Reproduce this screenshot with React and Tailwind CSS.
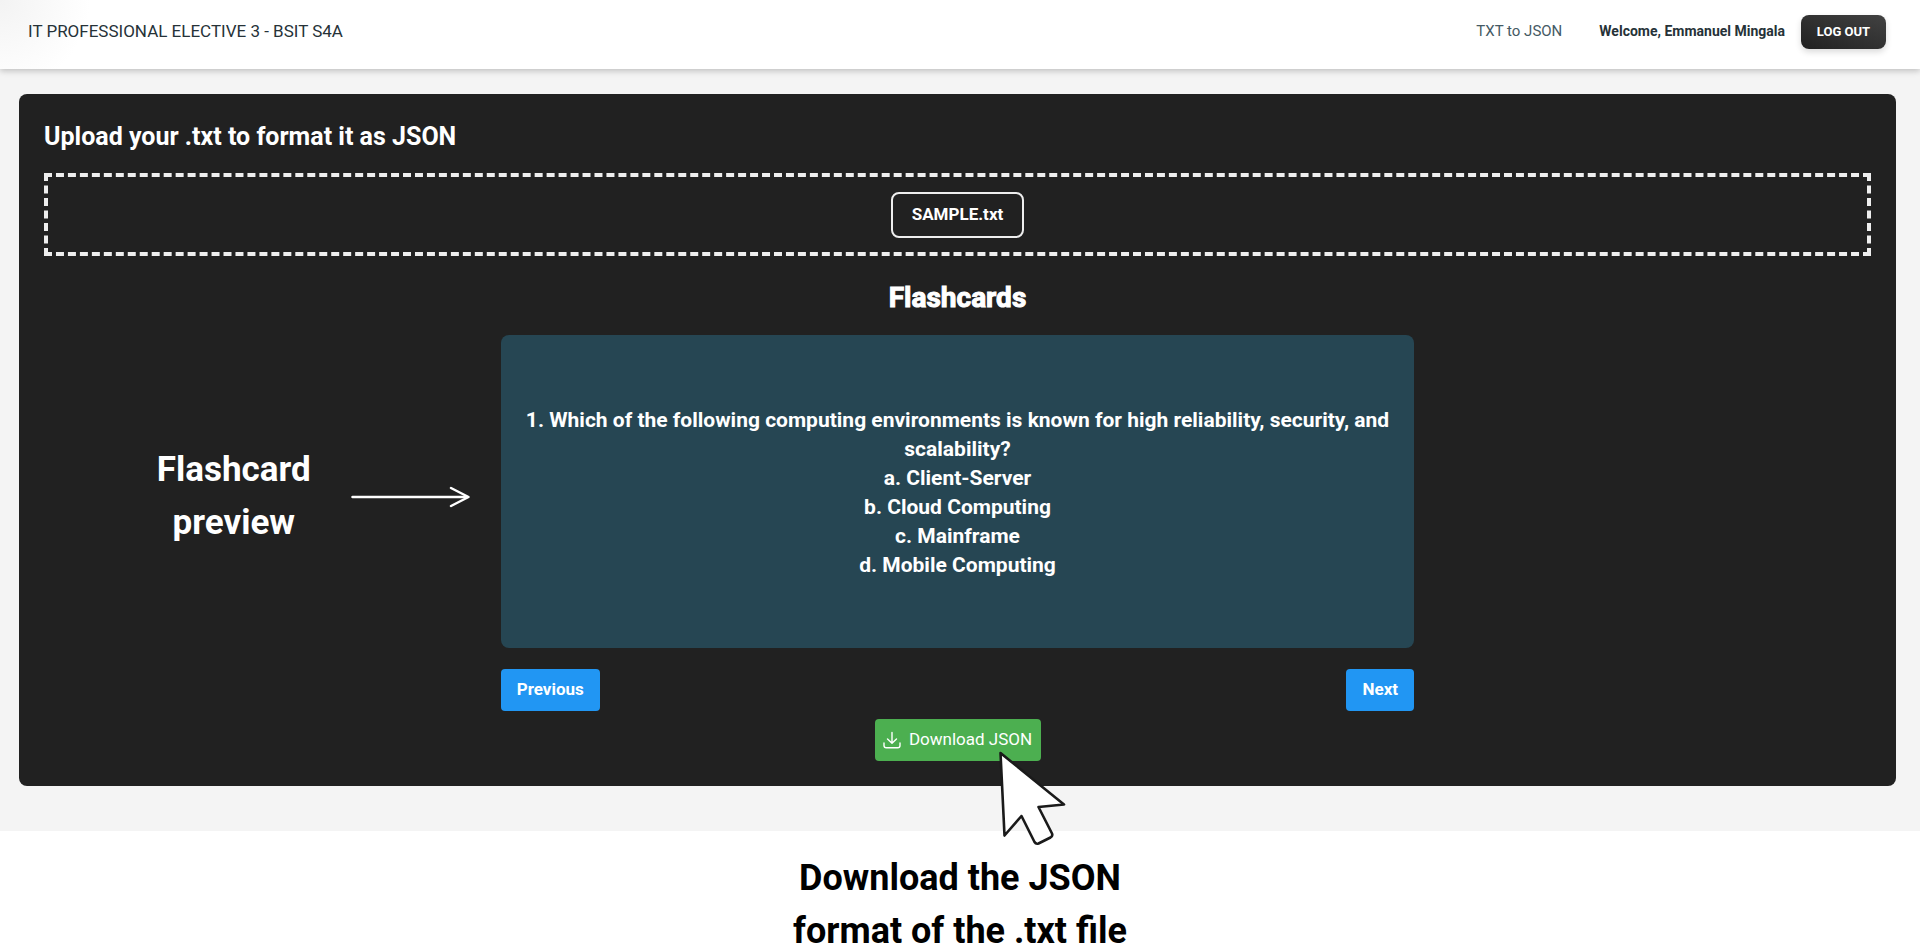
const display = 'font-[Roboto,sans-serif] font-bold';

const card = {
  question:
    '1. Which of the following computing environments is known for high reliability, security, and scalability?',
  options: ['a. Client-Server', 'b. Cloud Computing', 'c. Mainframe', 'd. Mobile Computing'],
};

function Header() {
  return (
    <header className="relative z-10 flex h-[69px] items-center bg-white bg-[radial-gradient(circle_at_0_0,#f3f3f3_0,#ffffff_90px)] pr-[34px] pl-7 pb-[6px] shadow-[0_2px_6px_rgba(0,0,0,0.22)]">
      <h1 className="text-[17px] text-[#263238]">IT PROFESSIONAL ELECTIVE 3 - BSIT S4A</h1>
      <nav className="ml-auto flex items-center">
        <a href="#convert" className="mr-[37px] text-[15px] text-[#455a64]">
          TXT to JSON
        </a>
        <span className={`${display} mr-4 text-[14px] text-[#263238]`}>Welcome, Emmanuel Mingala</span>
        <button
          type="button"
          className="h-[34px] w-[85px] rounded-lg bg-linear-to-tr from-[#212121] to-[#424242] text-[13px] font-bold text-white shadow-[0_3px_6px_rgba(0,0,0,0.15)]"
        >
          LOG OUT
        </button>
      </nav>
    </header>
  );
}

function PreviewNote() {
  return (
    <div className="flex items-center justify-end gap-10 pt-[10px] pr-[31px] text-white">
      <p className={`${display} flex flex-col gap-[13px] text-center text-[35px] leading-10`}>
        <span>Flashcard</span>
        <span>preview</span>
      </p>
      <svg width="119" height="22" viewBox="0 0 119 22" fill="none" stroke="currentColor" strokeLinecap="round" strokeLinejoin="round" aria-hidden="true">
        <path d="M1.5 11H116" strokeWidth="2.5" />
        <path d="M100 2L117.5 11L100 20" strokeWidth="2.5" />
      </svg>
    </div>
  );
}

function Cursor() {
  return (
    <svg className="absolute top-8 left-[123px]" width="68" height="95" viewBox="0 0 68 95" fill="#ffffff" stroke="#1a1a1a" strokeWidth="2.6" strokeLinejoin="round" aria-hidden="true">
      <path d="M2.5 2L66 53.500L40.500 56L54 82.500Q55 85 52.500 86.500L40.500 92.500Q38 93.500 36.500 91L23.500 65L6.500 84.500Z" />
    </svg>
  );
}

function DownloadIcon() {
  return (
    <svg width="18" height="18" viewBox="0 0 18 18" fill="none" stroke="currentColor" strokeWidth="1.4" strokeLinecap="round" strokeLinejoin="round" aria-hidden="true">
      <path d="M9 1.500V12M4.500 8L9 12.300L13.500 8" />
      <path d="M1 12V14.500Q1 16.800 3.300 16.800H14.700Q17 16.800 17 14.500V12" />
    </svg>
  );
}

export default function App() {
  return (
    <div className="bg-white font-[Roboto,sans-serif]">
      <div className="bg-[#f4f4f4] pb-[45px]">
        <Header />
        <main id="convert" className="mt-[25px] mr-6 ml-[19px] rounded-lg bg-[#212121] p-[25px] text-white">
          <h2 className="pt-[2px] mb-5 text-[25px] leading-8 font-bold">Upload your .txt to format it as JSON</h2>
          <div className="flex h-[83px] items-center justify-center border-4 border-dashed border-[#eeeeee]">
            <button type="button" className="h-[46px] w-[133px] rounded-lg border-2 border-[#eeeeee] text-[17px] font-bold">
              SAMPLE.txt
            </button>
          </div>
          <h2 className={`${display} mt-[22px] mb-[17px] text-center text-[28px] leading-10 [-webkit-text-stroke:1px_white]`}>
            Flashcards
          </h2>
          <div className="grid grid-cols-[1fr_2fr_1fr]">
            <PreviewNote />
            <section className={`${display} flex min-h-[313px] flex-col items-center justify-center rounded-lg bg-[#264653] px-5 pt-[3px] text-center text-[21px] leading-[29px]`}>
              <p>{card.question}</p>
              {card.options.map((option) => (
                <p key={option}>{option}</p>
              ))}
            </section>
          </div>
          <div className="mx-auto mt-[21px] flex w-1/2 justify-between">
            <button type="button" className="h-[42px] w-[99px] rounded bg-[#2196f3] text-[17px] font-bold">
              Previous
            </button>
            <button type="button" className="h-[42px] w-[68px] rounded bg-[#2196f3] text-[17px] font-bold">
              Next
            </button>
          </div>
          <div className="relative mx-auto mt-2 w-[166px]">
            <button type="button" className="flex h-[42px] w-full items-center justify-center gap-2 rounded bg-[#4caf50] text-[17px] whitespace-nowrap">
              <DownloadIcon />
              Download JSON
            </button>
            <Cursor />
          </div>
        </main>
      </div>
      <p className={`${display} mt-[27px] flex flex-col gap-[13px] text-center text-[36px] leading-10 text-black`}>
        <span>Download the JSON</span>
        <span>format of the .txt file</span>
      </p>
    </div>
  );
}
